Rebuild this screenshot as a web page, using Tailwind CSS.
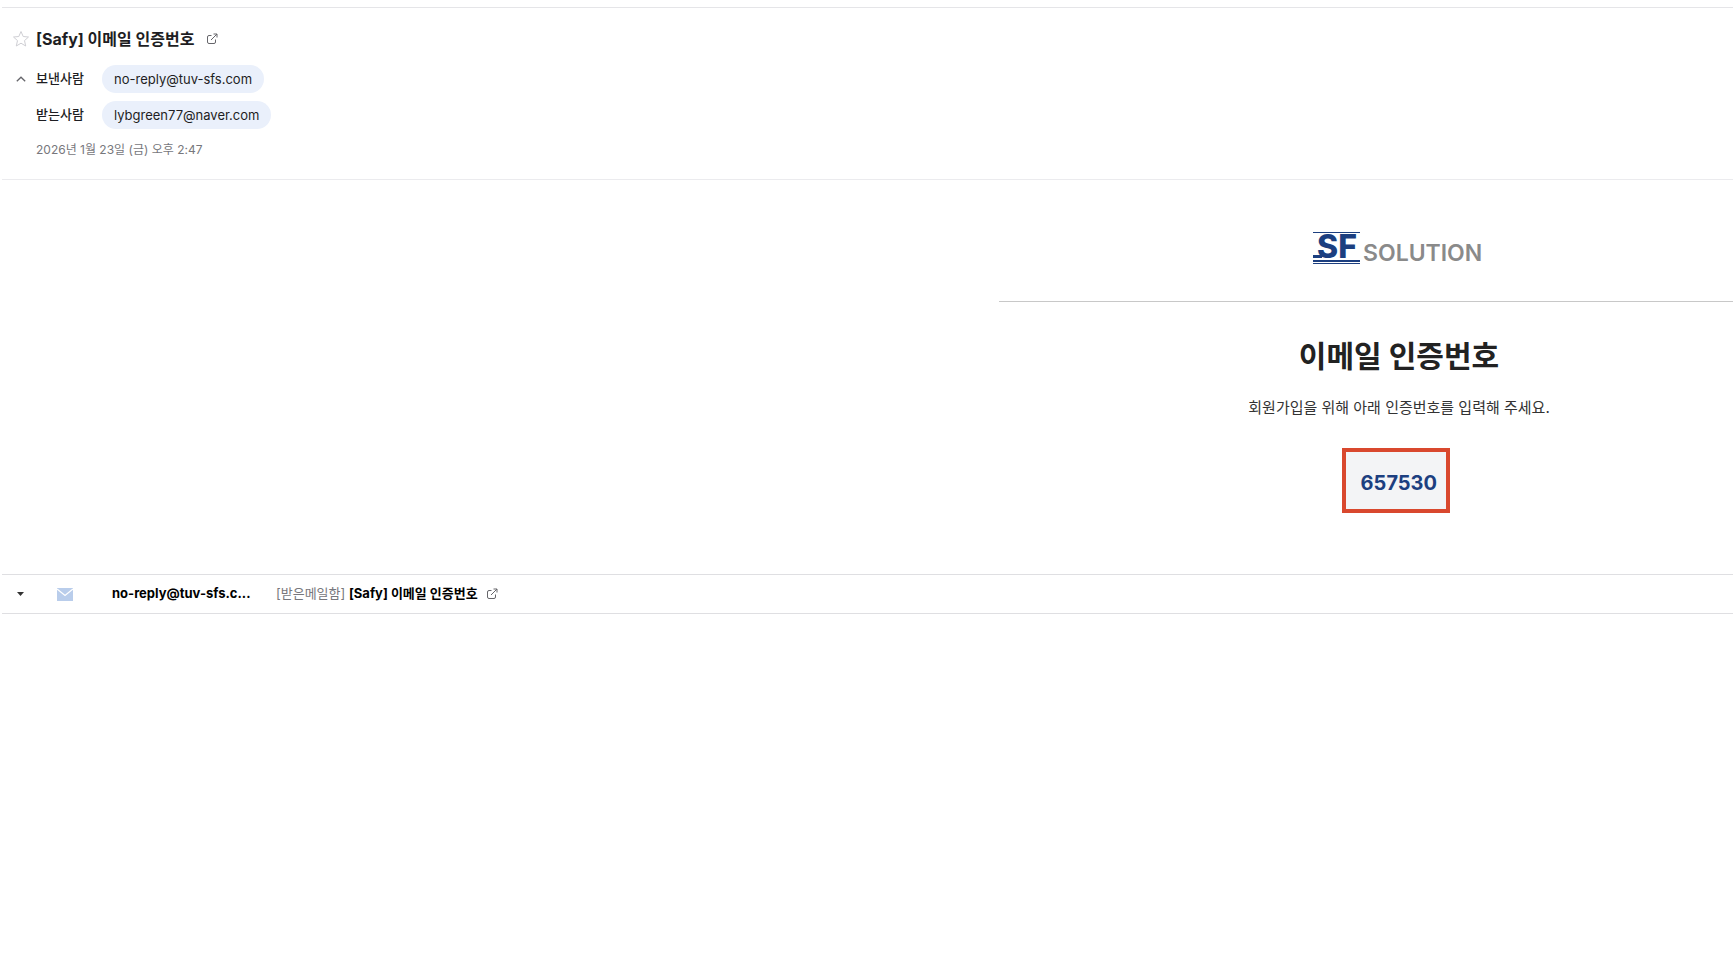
<!DOCTYPE html>
<html lang="ko">
<head>
    <meta charset="UTF-8">
    <meta name="viewport" content="width=device-width, initial-scale=1.0">
    <title>[Safy] 이메일 인증번호</title>
    <script src="https://cdn.jsdelivr.net/npm/@tailwindcss/browser@4"></script>
</head>
<body class="bg-white text-[#1e1e23] font-[Inter,'Noto_Sans_CJK_KR',sans-serif] overflow-x-hidden">

    <main class="mt-[7px] ml-0.5 border-t border-[#e5e5e8]">
        <!-- 메일 제목 및 정보 -->
        <header class="border-b border-[#ebebee] pt-[19px] pb-[19px] pl-[10px]">
            <div class="flex items-center h-6">
                <button type="button" aria-label="중요 표시" class="w-[18px] mr-[6px]">
                    <svg class="w-[18px] h-[18px]" viewBox="0 0 18 18" fill="none" stroke="#cfcfd4" stroke-width="1"><path d="M9 1.500l2.200 5 5.300.5-4 3.600 1.200 5.400L9 13.200l-4.700 2.800 1.200-5.400-4-3.600 5.300-.5z"/></svg>
                </button>
                <h1 class="text-base leading-6 font-bold whitespace-nowrap">[Safy] 이메일 인증번호</h1>
                <button type="button" aria-label="새창으로 보기" class="ml-3">
                    <svg class="w-3 h-3" viewBox="0 0 12 12" fill="none" stroke="#66666b" stroke-width="1"><path d="M5.500 2.500H3Q1.500 2.500 1.500 4v5Q1.500 10.500 3 10.500h5Q9.500 10.500 9.500 9V6.500M7.500 1H11v3.500M11 1L5 7"/></svg>
                </button>
            </div>

            <dl class="mt-[14px] text-[13px]">
                <div class="flex items-center h-7">
                    <button type="button" aria-label="접기" class="w-[18px] mr-[6px] flex justify-center">
                        <svg class="w-[10px] h-[6px]" viewBox="0 0 10 6" fill="none" stroke="#66666b" stroke-width="1.300"><path d="M.8 5.300L5 1.200l4.200 4.100"/></svg>
                    </button>
                    <dt class="w-[66px] font-medium whitespace-nowrap">보낸사람</dt>
                    <dd><a href="#" class="flex items-center h-7 px-3 pt-0.5 rounded-full bg-[#eaf0fb]">no-reply@tuv-sfs.com</a></dd>
                </div>
                <div class="flex items-center h-7 mt-2 pl-6">
                    <dt class="w-[66px] font-medium whitespace-nowrap">받는사람</dt>
                    <dd><a href="#" class="flex items-center h-7 px-3 pt-0.5 rounded-full bg-[#eaf0fb]">lybgreen77@naver.com</a></dd>
                </div>
            </dl>
            <p class="mt-[11px] pl-6 text-xs leading-5 text-[#77777c]">2026년 1월 23일 (금) 오후 2:47</p>
        </header>

        <!-- 메일 본문 -->
        <section class="overflow-hidden">
            <div class="ml-[997px] w-[800px] pt-[52px] pb-[61px] text-center">
                <div class="pb-[37px] border-b border-[#c8c8c8] flex justify-center">
                    <svg class="w-[174px] h-8 overflow-visible" viewBox="0 0 174 32" role="img" aria-label="SF SOLUTION">
                        <g fill="#1c3f80">
                            <rect x="1" width="47" height="1"/>
                            <rect x="1" y="23" width="9" height="3"/>
                            <rect x="1" y="28" width="47" height="2"/>
                            <rect x="1" y="31" width="47" height="1"/>
                            <text x="5" y="26" font-size="32" font-weight="800">SF</text>
                        </g>
                        <text x="51" y="29" font-size="23" font-weight="600" fill="#8a8a8a">SOLUTION</text>
                    </svg>
                </div>
                <h2 class="mt-9 text-[30px] leading-9 font-bold text-[#222]">이메일 인증번호</h2>
                <p class="mt-[22px] text-[15px] leading-6 text-[#333]">회원가입을 위해 아래 인증번호를 입력해 주세요.</p>
                <div class="flex justify-center mt-7 pr-[6px]">
                    <strong class="flex items-center justify-end w-[108px] h-[65px] pt-1 pr-[9px] border-4 border-[#d9482e] bg-[#f3f4f6] text-xl font-bold text-[#1c3f80]">657530</strong>
                </div>
            </div>
        </section>

        <!-- 메일 목록 -->
        <div class="flex items-center h-10 border-y border-[#dfdfe2] text-[13px] text-black whitespace-nowrap">
            <button type="button" aria-label="펼치기" class="ml-[15px] mr-[33px]">
                <svg class="w-[7px] h-1" viewBox="0 0 7 4"><path d="M0 0h7L3.500 4z" fill="#333"/></svg>
            </button>
            <svg class="w-4 h-[13px]" viewBox="0 0 16 13"><path d="M0 0h16v13H0z" fill="#b9cdeb"/><path d="M0 1l8 6.500L16 1" fill="none" stroke="#fff" stroke-width="1.300"/></svg>
            <a href="#" class="ml-[39px] w-[140px] mr-6 font-bold">no-reply@tuv-sfs.c...</a>
            <a href="#"><span class="text-[#77777c]">[받은메일함]</span> <span class="font-bold">[Safy] 이메일 인증번호</span></a>
            <button type="button" aria-label="새창으로 보기" class="ml-2">
                <svg class="w-3 h-3" viewBox="0 0 12 12" fill="none" stroke="#66666b" stroke-width="1"><path d="M5.500 2.500H3Q1.500 2.500 1.500 4v5Q1.500 10.500 3 10.500h5Q9.500 10.500 9.500 9V6.500M7.500 1H11v3.500M11 1L5 7"/></svg>
            </button>
        </div>
    </main>

</body>
</html>
